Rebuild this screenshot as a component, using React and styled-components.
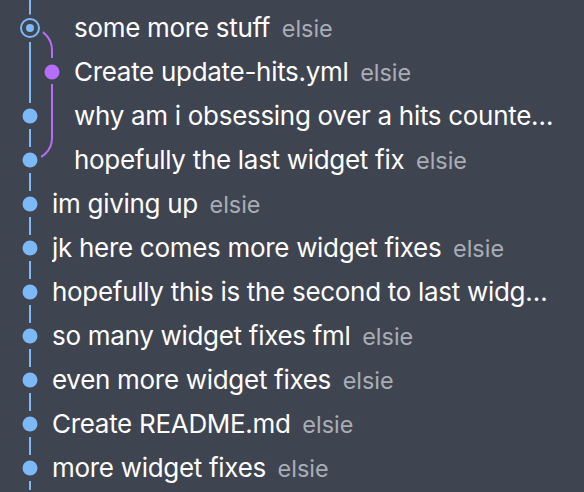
import React from 'react';
import styled, { createGlobalStyle } from 'styled-components';

const BG = '#3f4451';
const BLUE = '#7db9f7';
const PURPLE = '#b66df7';
const LANE = 22;
const ROW = 44;

const GlobalStyle = createGlobalStyle`
  html, body {
    margin: 0;
    padding: 0;
    background: ${BG};
    overflow: hidden;
  }
  body {
    font-family: Inter, "Noto Sans", "Liberation Sans", sans-serif;
    -webkit-font-smoothing: antialiased;
  }
`;

const HistoryList = styled.div`
  display: flex;
  flex-direction: column;
  width: 584px;
  height: 492px;
  overflow: hidden;
`;

const Stub = styled.svg`
  display: block;
  flex: none;
`;

const Row = styled.div`
  display: flex;
  align-items: center;
  height: ${ROW}px;
  flex: none;
`;

const GraphCell = styled.svg`
  display: block;
  flex: none;
  overflow: visible;
`;

const Label = styled.div`
  flex: 1;
  min-width: 0;
  margin-right: 30px;
  white-space: nowrap;
  overflow: hidden;
  text-overflow: ellipsis;
  font-size: 26px;
  letter-spacing: -0.3px;
  line-height: ${ROW}px;
  color: #ffffff;
`;

const Author = styled.span`
  margin-left: 0.5em;
  font-size: 0.9em;
  letter-spacing: 0;
  color: #a9adb5;
`;

const commits = [
  { message: 'some more stuff', author: 'elsie', kind: 'head', lanes: 2 },
  { message: 'Create update-hits.yml', author: 'elsie', kind: 'branch', lanes: 2 },
  { message: 'why am i obsessing over a hits counter', author: 'elsie', kind: 'pass', lanes: 2 },
  { message: 'hopefully the last widget fix', author: 'elsie', kind: 'merge', lanes: 2 },
  { message: 'im giving up', author: 'elsie', kind: 'dot', lanes: 1 },
  { message: 'jk here comes more widget fixes', author: 'elsie', kind: 'dot', lanes: 1 },
  { message: 'hopefully this is the second to last widget fix', author: 'elsie', kind: 'dot', lanes: 1 },
  { message: 'so many widget fixes fml', author: 'elsie', kind: 'dot', lanes: 1 },
  { message: 'even more widget fixes', author: 'elsie', kind: 'dot', lanes: 1 },
  { message: 'Create README.md', author: 'elsie', kind: 'dot', lanes: 1 },
  { message: 'more widget fixes', author: 'elsie', kind: 'dot', lanes: 1 },
];

const x0 = 30;
const x1 = x0 + LANE;
const cy = ROW / 2;

// vertical stub of the main lane, above and below the commit dot
const MainCut = ({ top = 9, bottom = 35 }) => (
  <>
    <line x1={x0} y1={0} x2={x0} y2={top} stroke={BLUE} strokeWidth="2" />
    <line x1={x0} y1={bottom} x2={x0} y2={ROW} stroke={BLUE} strokeWidth="2" />
  </>
);

const Dot = ({ x, color }) => <circle cx={x} cy={cy} r="7.5" fill={color} />;

const Graph = ({ kind, lanes }) => {
  const width = x0 + LANE * lanes;
  return (
    <GraphCell width={width} height={ROW}>
      {kind === 'head' && (
        <>
          <MainCut top={11} bottom={36} />
          <path d={`M ${x0} ${cy} A ${LANE} ${LANE} 0 0 1 ${x1} ${ROW}`} fill="none" stroke={PURPLE} strokeWidth="2" />
          <circle cx={x0} cy={cy} r="13.5" fill={BG} />
          <circle cx={x0} cy={cy} r="9" fill="none" stroke={BLUE} strokeWidth="2" />
          <circle cx={x0} cy={cy} r="4" fill={BLUE} />
        </>
      )}
      {kind === 'branch' && (
        <>
          <line x1={x0} y1={0} x2={x0} y2={ROW} stroke={BLUE} strokeWidth="2" />
          <line x1={x1} y1={0} x2={x1} y2={8} stroke={PURPLE} strokeWidth="2" />
          <line x1={x1} y1={34} x2={x1} y2={ROW} stroke={PURPLE} strokeWidth="2" />
          <Dot x={x1} color={PURPLE} />
        </>
      )}
      {kind === 'pass' && (
        <>
          <MainCut />
          <line x1={x1} y1={0} x2={x1} y2={ROW} stroke={PURPLE} strokeWidth="2" />
          <Dot x={x0} color={BLUE} />
        </>
      )}
      {kind === 'merge' && (
        <>
          <MainCut />
          <path d={`M ${x1} 0 A ${LANE} ${LANE} 0 0 1 ${x0} ${cy}`} fill="none" stroke={PURPLE} strokeWidth="2" />
          <circle cx={x0} cy={cy} r="11.5" fill={BG} />
          <Dot x={x0} color={BLUE} />
        </>
      )}
      {kind === 'dot' && (
        <>
          <MainCut />
          <Dot x={x0} color={BLUE} />
        </>
      )}
    </GraphCell>
  );
};

const App = () => (
  <>
    <GlobalStyle />
    <HistoryList>
      <Stub width="60" height="6">
        <line x1={x0} y1={0} x2={x0} y2={6} stroke={BLUE} strokeWidth="2" />
      </Stub>
      {commits.map((c, i) => (
        <Row key={i}>
          <Graph kind={c.kind} lanes={c.lanes} />
          <Label>
            {c.message}
            <Author>{c.author}</Author>
          </Label>
        </Row>
      ))}
    </HistoryList>
  </>
);

export default App;
